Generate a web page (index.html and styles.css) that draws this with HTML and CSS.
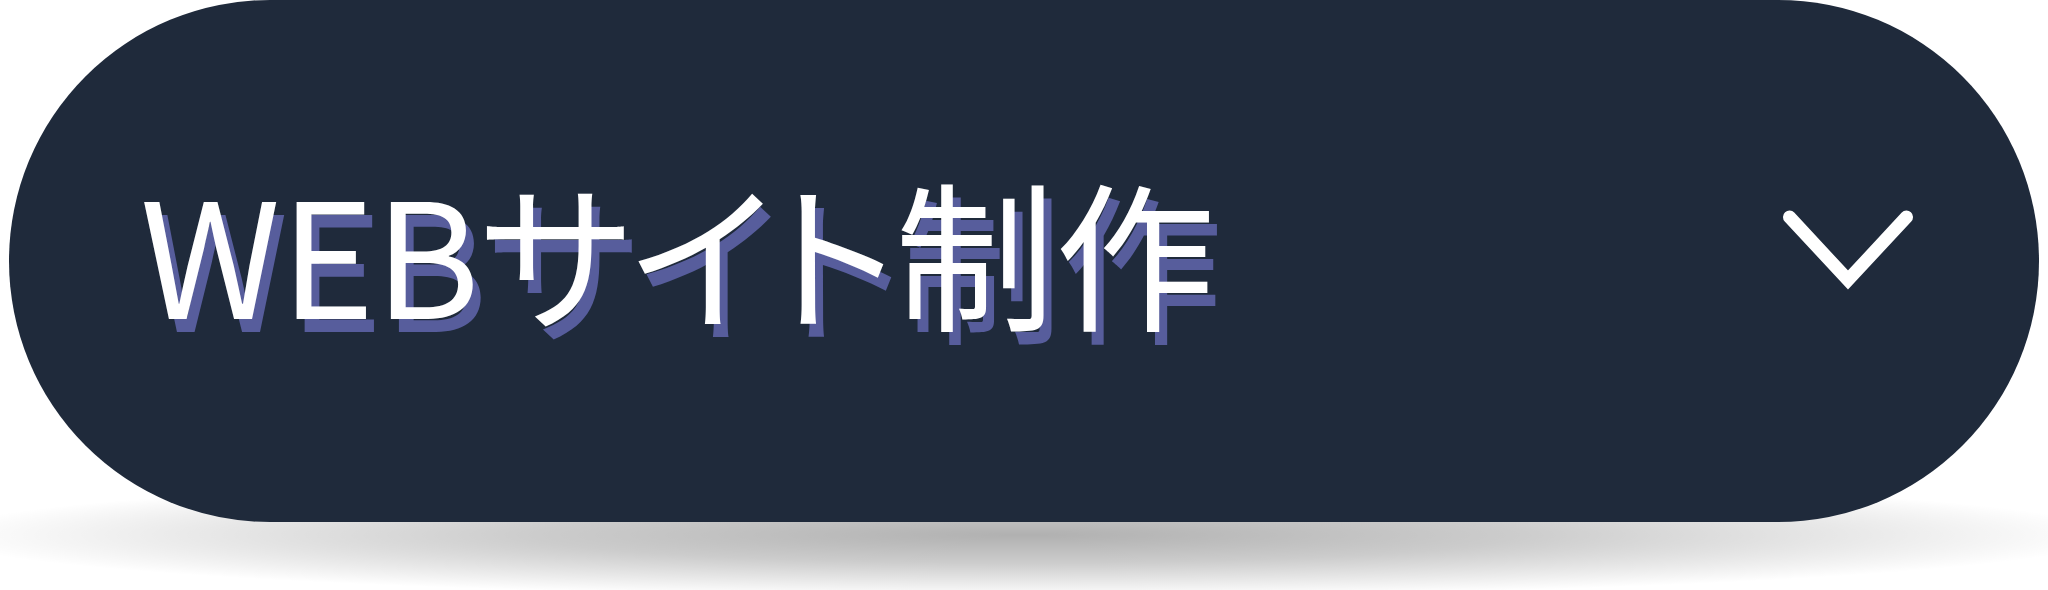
FILE: index.html
```html
<!DOCTYPE html>
<html lang="ja">
<head>
<meta charset="utf-8">
<title>WEBサイト制作</title>
<link rel="stylesheet" href="styles.css">
</head>
<body>
  <div class="wrap">
    <a class="menu-btn" href="#web">
      <span class="menu-label">WEBサイト制作</span>
      <svg class="menu-arrow" viewBox="0 0 130 80" aria-hidden="true">
        <polyline points="6.5,7 65,70 123.5,7" />
      </svg>
    </a>
  </div>
</body>
</html>
```

FILE: styles.css
```css
*{
  margin: 0;
  padding: 0;
  box-sizing: border-box;
}
body{
  background: #fff;
  font-family: "Noto Sans CJK JP", "Noto Sans", sans-serif;
}
.wrap{
  position: relative;
  width: 2048px;
  height: 590px;
  padding-left: 9px;
}
/* soft floor shadow under the button */
.wrap::before{
  content: "";
  position: absolute;
  left: 0;
  top: 470px;
  width: 2048px;
  height: 130px;
  background: radial-gradient(ellipse 1090px 62px at 50% 65px, rgba(0,0,0,.31) 0%, rgba(0,0,0,.2) 45%, rgba(0,0,0,0) 100%);
}
.menu-btn{
  position: relative;
  display: flex;
  align-items: center;
  width: 2030px;
  height: 522px;
  padding: 0 126px 0 131px;
  border-radius: 261px;
  background: #1f2a3b;
  color: #fff;
  text-decoration: none;
}
.menu-label{
  font-size: 160px;
  line-height: 1;
  margin-bottom: 24px;
  font-feature-settings: "palt";
  text-shadow: 8px 13px 0 #575d9c;
  white-space: nowrap;
}
.menu-arrow{
  margin-left: auto;
  margin-bottom: 22px;
  width: 130px;
  height: 80px;
}
.menu-arrow polyline{
  fill: none;
  stroke: #fff;
  stroke-width: 13;
  stroke-linecap: round;
  stroke-linejoin: miter;
}
```
